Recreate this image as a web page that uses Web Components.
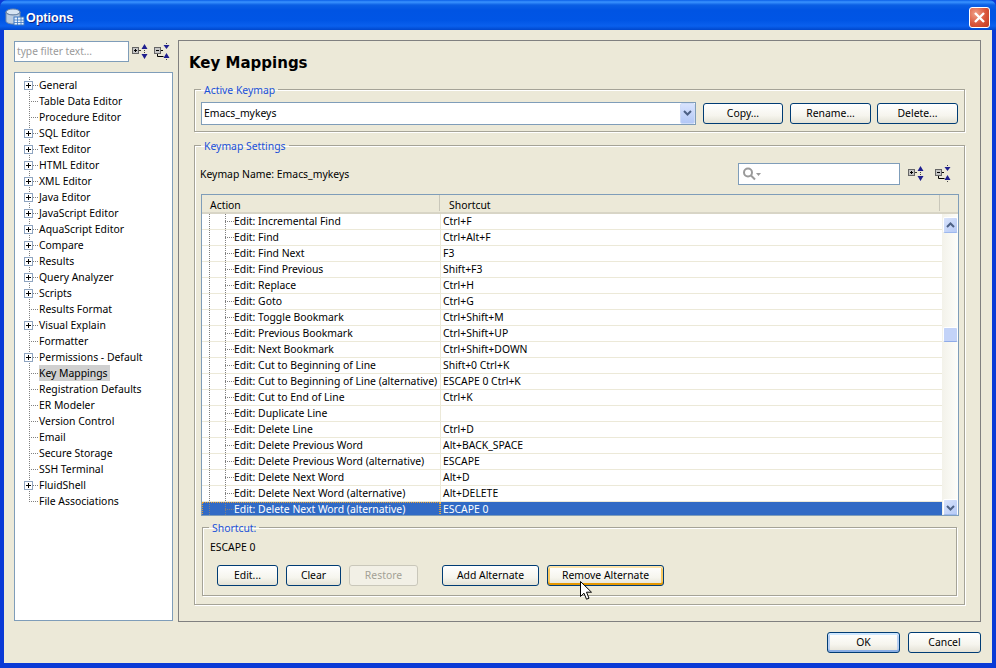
<!DOCTYPE html>
<html>
<head>
<meta charset="utf-8">
<title>Options</title>
<style>
  html,body{margin:0;padding:0;background:#ece9d8;}
  body{font:10.4px "Noto Sans",sans-serif;color:#000;}
</style>
</head>
<body>
<xp-window>
  <prefs-tree slot="side"></prefs-tree>
  <h1 slot="title">Key Mappings</h1>
  <xp-group slot="panel" label="Active Keymap" style="height:49px">
    <div style="display:flex;align-items:center;padding:6px 6px 0">
      <xp-combo>Emacs_mykeys</xp-combo>
      <xp-button w="80" style="margin-left:7px">Copy...</xp-button>
      <xp-button w="81" style="margin-left:7px">Rename...</xp-button>
      <xp-button w="81" style="margin-left:6px">Delete...</xp-button>
    </div>
  </xp-group>
  <xp-group slot="panel" label="Keymap Settings" style="height:466px;margin-top:7px">
    <keymap-settings></keymap-settings>
  </xp-group>
  <xp-button slot="foot" w="73" kind="default">OK</xp-button>
  <xp-button slot="foot" w="73">Cancel</xp-button>
</xp-window>
<script>
const TREE = [
  ['General',1],['Table Data Editor'],['Procedure Editor'],['SQL Editor',1],['Text Editor',1],
  ['HTML Editor',1],['XML Editor',1],['Java Editor',1],['JavaScript Editor',1],['AquaScript Editor',1],
  ['Compare',1],['Results',1],['Query Analyzer',1],['Scripts',1],['Results Format'],['Visual Explain',1],
  ['Formatter'],['Permissions - Default',1],['Key Mappings',0,1],['Registration Defaults'],['ER Modeler'],
  ['Version Control'],['Email'],['Secure Storage'],['SSH Terminal'],['FluidShell',1],['File Associations']
]
const ROWS = [
  ['Incremental Find','Ctrl+F'],['Find','Ctrl+Alt+F'],['Find Next','F3'],['Find Previous','Shift+F3'],
  ['Replace','Ctrl+H'],['Goto','Ctrl+G'],['Toggle Bookmark','Ctrl+Shift+M'],['Previous Bookmark','Ctrl+Shift+UP'],
  ['Next Bookmark','Ctrl+Shift+DOWN'],['Cut to Beginning of Line','Shift+0 Ctrl+K'],
  ['Cut to Beginning of Line (alternative)','ESCAPE 0 Ctrl+K'],['Cut to End of Line','Ctrl+K'],['Duplicate Line',''],
  ['Delete Line','Ctrl+D'],['Delete Previous Word','Alt+BACK_SPACE'],['Delete Previous Word (alternative)','ESCAPE'],
  ['Delete Next Word','Alt+D'],['Delete Next Word (alternative)','Alt+DELETE'],['Delete Next Word (alternative)','ESCAPE 0']
]
const FONT = `font-family:"Noto Sans",sans-serif;font-size:10.4px;`
const TRI = '#1f1f8f'

function el(tag, cls, text) {
  const e = document.createElement(tag)
  if (cls) e.className = cls
  if (text != null) e.textContent = text
  return e
}

customElements.define('xp-window', class extends HTMLElement {
  constructor() {
    super()
    this.attachShadow({ mode: 'open' }).innerHTML = `
    <style>
      :host{display:flex;flex-direction:column;width:996px;height:668px;${FONT}
        background:#0a3ad6;overflow:hidden;position:relative;}
      .bar{height:30px;flex:none;display:flex;align-items:center;padding:4px 6px 0 5px;box-sizing:border-box;
        border-radius:7px 7px 0 0;
        background:linear-gradient(#0a5fe8 0,#3a93ff 2px,#0a5fe4 5px,#0054e3 10px,#0055e5 20px,#0a60ee 26px,#0047cc 30px);}
      .ttl{color:#fff;font:bold 12.5px "Liberation Sans",sans-serif;margin-left:1px;padding-top:1px;flex:1;text-shadow:1px 1px #0f1f80;}
      .close{width:21px;height:21px;box-sizing:border-box;border:1px solid #fff;border-radius:3px;
        background:radial-gradient(circle at 30% 30%,#f0a088,#d9553a 55%,#c03a20);display:flex;}
      .client{flex:1;margin:0 4px 5px;background:#ece9d8;padding:10px 11px 0 10px;display:grid;
        grid-template-columns:159px 803px;column-gap:5px;grid-template-rows:582px 1fr;}
      .side{display:flex;flex-direction:column;min-height:0;}
      .filter{display:flex;align-items:center;margin:1px 0 10px;gap:3px;height:21px;}
      .input{width:115px;height:21px;box-sizing:border-box;border:1px solid #7f9db9;background:#fff;color:#9a9a9a;
        padding-left:2px;line-height:19px;font-size:10.2px;white-space:nowrap;}
      .panel{border:1px solid #808080;box-sizing:border-box;padding:0 15px 0 15px;}
      ::slotted(h1){font:bold 15px "DejaVu Sans",sans-serif;margin:12px 0 10px -5px;line-height:20px;height:20px;}
      .foot{grid-column:1 / 3;display:flex;justify-content:flex-end;gap:8px;padding-top:10px;}
    </style>
    <div class="bar">
      <svg width="20" height="20" viewBox="0 0 20 20">
        <ellipse cx="8" cy="5" rx="7" ry="3" fill="#d6e4f2" stroke="#6d86a5"/>
        <path d="M1 5v9c0 1.6 3 3 7 3s7-1.4 7-3V5c0 1.6-3 3-7 3S1 6.600 1 5z" fill="#b9cbe0" stroke="#6d86a5"/>
        <rect x="9" y="10" width="10" height="8" fill="#e8f1fb" stroke="#3b78c4"/>
        <path d="M9 13h10M9 15.500h10M12.500 10v8M16 10v8" stroke="#3b78c4" stroke-width=".8"/>
      </svg>
      <span class="ttl">Options</span>
      <div class="close"><svg width="19" height="19" viewBox="0 0 19 19"><path d="M5 5l9 9M14 5l-9 9" stroke="#fff" stroke-width="2.400"/></svg></div>
    </div>
    <div class="client">
      <div class="side">
        <div class="filter">
          <div class="input">type filter text...</div>
          <tool-icons></tool-icons>
        </div>
        <slot name="side"></slot>
      </div>
      <div class="panel"><slot name="title"></slot><slot name="panel"></slot></div>
      <div class="foot"><slot name="foot"></slot></div>
    </div>
    <svg style="position:absolute;left:580px;top:581px" width="14" height="22" viewBox="0 0 14 22">
      <path d="M.5.500v15l3.500-3.300 2.500 6 2.500-1-2.500-6h5z" fill="#fff" stroke="#000"/>
    </svg>`
  }
})

customElements.define('tool-icons', class extends HTMLElement {
  constructor() {
    super()
    this.attachShadow({ mode: 'open' }).innerHTML = `
    <style>:host{display:flex;gap:var(--icon-gap,4px);align-items:center;flex:none;}svg{display:block}</style>
    <svg width="18" height="18" viewBox="0 0 18 18">
      <rect x=".5" y="4.500" width="6" height="6" fill="#c4c4c4" stroke="#666"/>
      <path d="M2 7.500h3M3.500 6v3" stroke="#000"/>
      <path d="M7 7.500h2" stroke="#333"/>
      <path d="M12.500 1l3 5h-6zM12.500 16l-3-5h6z" fill="${TRI}"/>
      <path d="M12.500 7v1M12.500 9v1" stroke="#444"/>
    </svg>
    <svg width="18" height="18" viewBox="0 0 18 18">
      <rect x=".5" y="4.500" width="6" height="6" fill="#c4c4c4" stroke="#666"/>
      <path d="M2 7.500h3" stroke="#000"/>
      <path d="M3.500 11v2.500h6M7 7.500h2" stroke="#000" fill="none"/>
      <path d="M12.500 6l-3-4h6zM12.500 10l3 5h-6z" fill="${TRI}"/>
      <path d="M12.500 0v1M12.500 16v1" stroke="#444"/>
    </svg>`
  }
})

customElements.define('prefs-tree', class extends HTMLElement {
  constructor() {
    super()
    const shadow = this.attachShadow({ mode: 'open' })
    shadow.innerHTML = `
    <style>
      :host{display:block;height:549px;box-sizing:border-box;border:1px solid #7f9db9;background:#fff;padding-top:4px;}
      .row{height:16px;display:flex;align-items:center;padding-left:9px;line-height:16px;white-space:nowrap;
        background:
          repeating-linear-gradient(#808080 0 1px,transparent 1px 2px) 14px 0/1px 100% no-repeat,
          repeating-linear-gradient(90deg,#808080 0 1px,transparent 1px 2px) 14px 8px/10px 1px no-repeat;}
      .row:last-child{background-size:1px 9px,10px 1px;}
      .box{width:9px;height:9px;box-sizing:border-box;border:1px solid #8ea4c0;background:#fff;display:flex;margin-top:1px;}
      .gap{width:9px;}
      .t{margin-left:6px;padding-right:2px;}
      .sel .t{background:#d0d0d0;}
    </style>`
    for (const [name, kids, sel] of TREE) {
      const row = el('div', 'row' + (sel ? ' sel' : ''))
      const b = el('span', kids ? 'box' : 'gap')
      if (kids) b.innerHTML = '<svg width="7" height="7" viewBox="0 0 7 7"><path d="M1 3.500h5M3.500 1v5" stroke="#000"/></svg>'
      row.append(b, el('span', 't', name))
      shadow.append(row)
    }
  }
})

customElements.define('xp-button', class extends HTMLElement {
  constructor() {
    super()
    this.attachShadow({ mode: 'open' }).innerHTML = `
    <style>
      :host{display:inline-flex;flex:none;align-items:center;justify-content:center;height:21px;box-sizing:border-box;
        border:1px solid #003c74;border-radius:3px;padding-bottom:2px;${FONT}
        background:linear-gradient(#fff,#f6f5ee 60%,#e4e2d6);}
      :host([kind=default]){box-shadow:inset 0 -2px 0 #89ade4,inset 0 2px 0 #cee7ff,inset 2px 0 0 #b9d0f2,inset -2px 0 0 #b9d0f2;}
      :host([kind=focus]){box-shadow:inset 0 -2px 0 #e59700,inset 0 2px 0 #fde3a8,inset 2px 0 0 #f8c860,inset -2px 0 0 #f8c860;}
      :host([disabled]){border-color:#c9c7ba;color:#a3a195;background:#f2f0e6;}
    </style><slot></slot>`
  }
  connectedCallback() { this.style.width = this.getAttribute('w') + 'px' }
})

customElements.define('xp-group', class extends HTMLElement {
  constructor() {
    super()
    this.attachShadow({ mode: 'open' }).innerHTML = `
    <style>
      :host{display:block;box-sizing:border-box;}
      fieldset{margin:0;padding:0;height:100%;min-width:0;box-sizing:border-box;border:1px solid #a5a397;
        box-shadow:1px 1px 0 #fff,inset 1px 1px 0 #fff;}
      legend{color:#1a50d8;margin-left:6px;padding:0 3px;height:13px;line-height:15px;${FONT}}
    </style>
    <fieldset><legend></legend><slot></slot></fieldset>`
  }
  connectedCallback() { this.shadowRoot.querySelector('legend').textContent = this.getAttribute('label') }
})

customElements.define('xp-combo', class extends HTMLElement {
  constructor() {
    super()
    this.attachShadow({ mode: 'open' }).innerHTML = `
    <style>
      :host{flex:none;display:flex;width:495px;height:23px;box-sizing:border-box;border:1px solid #7f9db9;background:#fff;
        align-items:center;padding-left:2px;}
      span{flex:1;padding-bottom:1px;}
      .arr{width:15px;height:21px;box-sizing:border-box;border:1px solid #cfdcf8;border-radius:2px;
        background:linear-gradient(#d8e3fd,#b3c8f6);display:flex;align-items:center;justify-content:center;}
    </style>
    <span><slot></slot></span>
    <div class="arr"><svg width="9" height="7" viewBox="0 0 9 7"><path d="M1 1l3.500 3.500L8 1" fill="none" stroke="#4d6185" stroke-width="2"/></svg></div>`
  }
})

customElements.define('xp-scrollbar', class extends HTMLElement {
  constructor() {
    super()
    const btn = d => `<div class="b"><svg width="9" height="7" viewBox="0 0 9 7"><path d="${d}" fill="none" stroke="#4d6185" stroke-width="2"/></svg></div>`
    this.attachShadow({ mode: 'open' }).innerHTML = `
    <style>
      :host{display:flex;flex-direction:column;width:16px;flex:none;padding:3px 0 0;box-sizing:border-box;
        background:linear-gradient(90deg,#f3f2ea,#fdfdfa);}
      .b{width:15px;height:16px;margin-left:1px;flex:none;box-sizing:border-box;border:1px solid #fff;border-bottom-color:#9db8ee;border-radius:2px;
        background:linear-gradient(135deg,#d8e3fb,#b6caf6);display:flex;align-items:center;justify-content:center;}
      .track{flex:1;display:flex;flex-direction:column;padding-top:94px;}
      .thumb{width:15px;height:15px;margin-left:1px;box-sizing:border-box;border:1px solid #fff;border-bottom-color:#8fabe8;border-radius:2px;background:#c3d3f8;}
    </style>
    ${btn('M1 5l3.500-3.500L8 5')}
    <div class="track"><div class="thumb"></div></div>
    ${btn('M1 2l3.500 3.500L8 2')}`
  }
})

customElements.define('keymap-table', class extends HTMLElement {
  constructor() {
    super()
    const shadow = this.attachShadow({ mode: 'open' })
    shadow.innerHTML = `
    <style>
      :host{display:flex;flex-direction:column;height:322px;width:758px;box-sizing:border-box;border:1px solid #7f9db9;background:#fff;overflow:hidden;}
      .head{height:19px;flex:none;display:grid;grid-template-columns:238px 500px 18px;background:#ece9d8;
        box-shadow:inset 0 -2px 0 #d8d5c6;}
      .head span{padding-left:8px;border-right:1px solid #c9c7ba;height:16px;line-height:20px;}
      .head span:nth-child(2){padding-left:9px;}
      .head span:last-child{border:0}
      .wrap{flex:1;display:flex;min-height:0;}
      .rows{width:740px;flex:none;overflow:hidden;}
      .row{height:16px;box-sizing:border-box;border-bottom:1px solid #ece9d8;display:grid;grid-template-columns:238px 1fr;line-height:14px;white-space:nowrap;}
      .a{padding-left:32px;
        background:
          repeating-linear-gradient(#808080 0 1px,transparent 1px 2px) 7px 0/1px 100% no-repeat,
          repeating-linear-gradient(#808080 0 1px,transparent 1px 2px) 23px 0/1px 100% no-repeat,
          repeating-linear-gradient(90deg,#808080 0 1px,transparent 1px 2px) 23px 7px/9px 1px no-repeat;}
      .s{padding-left:2px;border-left:1px solid #ece9d8;}
      .sel{height:13px;background:#316ac5;color:#fff;border-bottom:0;}
      .sel .s{border-left:1px dotted #f0b040;}
      .sel .a{outline:1px dotted #e8a030;outline-offset:-1px;}
    </style>
    <div class="head"><span>Action</span><span>Shortcut</span><span></span></div>`
    const wrap = el('div', 'wrap')
    const rows = el('div', 'rows')
    ROWS.forEach(([a, s], i) => {
      const row = el('div', 'row' + (i == ROWS.length - 1 ? ' sel' : ''))
      row.append(el('div', 'a', 'Edit: ' + a), el('div', 's', s))
      rows.append(row)
    })
    wrap.append(rows, el('xp-scrollbar'))
    shadow.append(wrap)
  }
})

customElements.define('keymap-settings', class extends HTMLElement {
  constructor() {
    super()
    this.attachShadow({ mode: 'open' }).innerHTML = `
    <style>
      :host{display:block;padding:0 5px 0 6px;}
      .top{height:42px;display:flex;align-items:center;padding:2px 6px 0 0;box-sizing:border-box;--icon-gap:9px;}
      .name{flex:1;margin-left:-1px;padding-bottom:1px;}
      .search{width:162px;height:22px;box-sizing:border-box;border:1px solid #7f9db9;background:#fff;display:flex;align-items:center;padding-left:3px;margin-right:8px;}
      .short{margin:5px 2px 0 1px;}
      .val{padding:6px 0 0 7px;line-height:14px;height:31px;box-sizing:border-box;}
      .btns{display:flex;padding-left:14px;gap:8px;}
    </style>
    <div class="top">
      <span class="name">Keymap Name: Emacs_mykeys</span>
      <div class="search"><svg width="20" height="14" viewBox="0 0 20 14">
        <circle cx="6" cy="5.500" r="4" fill="none" stroke="#9a9a9a" stroke-width="2"/>
        <path d="M9 8.500l4 4" stroke="#9a9a9a" stroke-width="2"/><path d="M14 6h5l-2.500 3z" fill="#9a9a9a"/></svg></div>
      <tool-icons></tool-icons>
    </div>
    <keymap-table></keymap-table>
    <xp-group class="short" label="Shortcut:" style="height:75px">
      <div class="val">ESCAPE 0</div>
      <div class="btns">
        <xp-button w="61">Edit...</xp-button>
        <xp-button w="55">Clear</xp-button>
        <xp-button w="69" disabled>Restore</xp-button>
        <xp-button w="97" style="margin-left:16px">Add Alternate</xp-button>
        <xp-button w="117" kind="focus">Remove Alternate</xp-button>
      </div>
    </xp-group>`
  }
})
</script>
</body>
</html>
